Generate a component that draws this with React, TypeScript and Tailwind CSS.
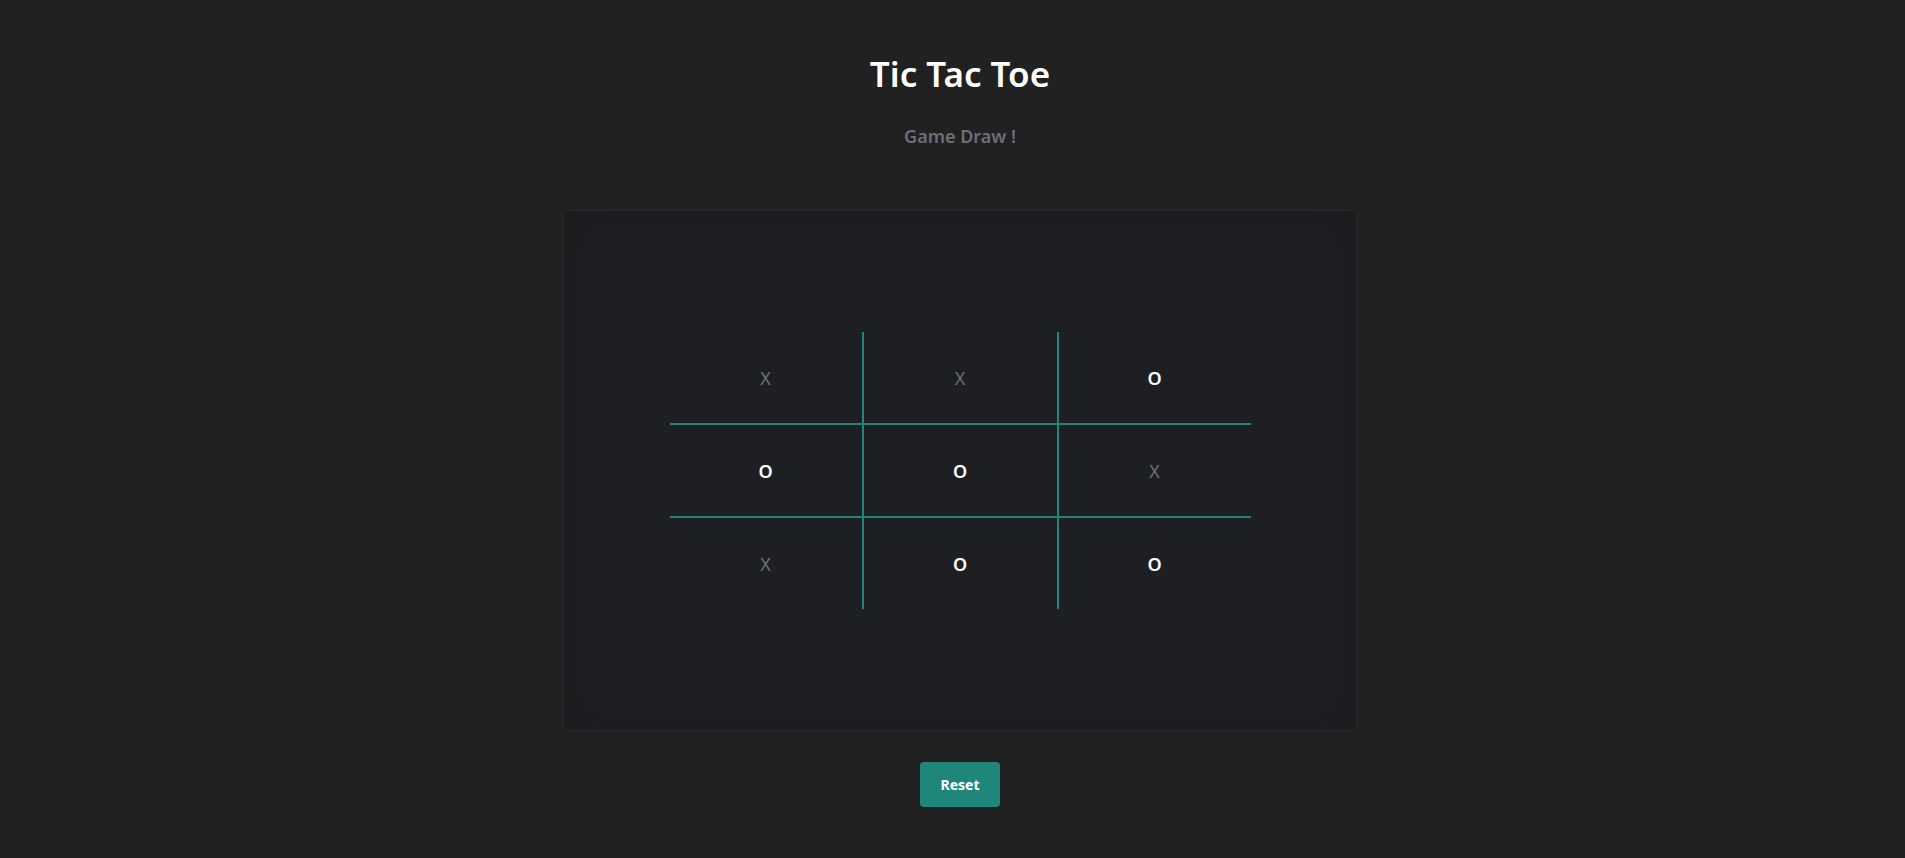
import { useState } from 'react';

type Cell = 'X' | 'O' | '';

const initialBoard: Cell[] = ['X', 'X', 'O', 'O', 'O', 'X', 'X', 'O', 'O'];

const App = () => {
    const [board, setBoard] = useState<Cell[]>(initialBoard);

    return (
        <div
            className="h-screen overflow-hidden bg-[#212121] flex flex-col items-center pl-[15px]"
            style={{ fontFamily: '"Noto Sans", "Open Sans", sans-serif' }}
        >
            {/* Header */}
            <h1 className="pt-[52px] text-[35px] leading-[44px] font-semibold text-white">Tic Tac Toe</h1>
            <p className="mt-[28px] text-[18px] leading-[24px] font-semibold text-[#6b7078]">Game Draw !</p>

            {/* Board card */}
            <div className="mt-[62px] w-[794px] h-[521px] flex items-center justify-center bg-[#1e1f22] border border-[#272a2e] rounded-md shadow-[inset_0_0_40px_rgba(0,0,0,0.15)]">
                <div className="grid grid-cols-[194px_195px_192px] grid-rows-[93px_93px_91px]">
                    {board.map((cell, i) => {
                        const col = i % 3;
                        const row = Math.floor(i / 3);
                        return (
                            <div
                                key={i}
                                className={`flex items-center justify-center pt-[2px] border-[#20857a] ${col < 2 ? 'border-r-2' : ''} ${row < 2 ? 'border-b-2' : ''}`}
                            >
                                {cell === 'X' ? (
                                    <span className="text-[18px] text-[#6b7078]">X</span>
                                ) : (
                                    <span className="text-[18px] font-semibold text-white">{cell}</span>
                                )}
                            </div>
                        );
                    })}
                </div>
            </div>

            {/* Reset */}
            <button
                onClick={() => setBoard(Array(9).fill(''))}
                className="mt-[31px] w-[80px] h-[45px] rounded bg-[#20857a] text-white text-[14px] font-bold"
            >
                Reset
            </button>
        </div>
    );
};

export default App;
